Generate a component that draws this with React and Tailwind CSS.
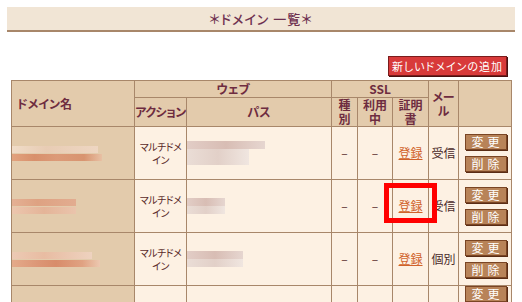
import React from "react";

const rows = [
  {
    domain: [
      { w: 86, c: "bg-[linear-gradient(90deg,#f0dcc8,#e8ccb4_40%,#eed6c2)]" },
      { w: 90, c: "bg-[linear-gradient(90deg,#e2a27e,#d8906c_25%,#dc9a78_50%,#d89470_80%,#e8c0a4)]" },
    ],
    path: [78, 62, 62],
    mail: "受信",
  },
  {
    domain: [
      { w: 64, c: "bg-[linear-gradient(90deg,#e4b094,#dea282_40%,#e2ac90)]" },
      { w: 64, c: "bg-[linear-gradient(90deg,#ecc6ae,#e4b498_50%,#eac4ac)]" },
    ],
    path: [38, 38],
    mail: "受信",
  },
  {
    domain: [
      { w: 80, c: "bg-[linear-gradient(90deg,#eccab4,#e8bca2_40%,#eed2bf)]" },
      { w: 88, c: "bg-[linear-gradient(90deg,#e4aa8a,#dc9676_30%,#d88c6a_50%,#e0a282_80%,#ecc8b0)]" },
    ],
    path: [56, 56],
    mail: "個別",
  },
];

function Btn({ children }) {
  return (
    <div className="w-[42px] h-[16px] bg-[#b88358] border border-[#7a4524] shadow-[1px_1px_0_#5a2c14] text-white text-[12px] leading-[14px] text-center tracking-[4px] pl-[3px] whitespace-nowrap">
      {children}
    </div>
  );
}

function DataRow({ row }) {
  return (
    <tr className="h-[53px]">
      <td className="bg-[#e3cbac] px-[3px] align-middle">
        <div className="flex flex-col gap-[1px]">
          {row.domain.map((b, i) => (
            <div key={i} className={`h-[7px] ${b.c}`} style={{ width: b.w }} />
          ))}
        </div>
      </td>
      <td className="text-center text-[10px] leading-[13px] text-[#5a2a2a] tracking-[-0.5px]">
        <span className="whitespace-nowrap">マルチドメ</span>
        <br />
        イン
      </td>
      <td className="px-[3px]">
        <div className="flex flex-col">
          {row.path.map((w, i) => (
            <div
              key={i}
              className={`h-[8px] ${i === 0 ? "bg-[linear-gradient(90deg,#e2cdc6,#d8bdb4_50%,#e6d6d0)]" : "bg-[linear-gradient(90deg,#eaddd6,#e2d0c8_50%,#f0e6e0)]"}`}
              style={{ width: w }}
            />
          ))}
        </div>
      </td>
      <td className="text-center text-[12px] text-[#5a2a2a]">–</td>
      <td className="text-center text-[12px] text-[#5a2a2a]">–</td>
      <td className="text-center text-[12px]">
        <span className="text-[#d0622a] underline">登録</span>
      </td>
      <td className="text-center text-[12px] text-[#4a2a2a] whitespace-nowrap">{row.mail}</td>
      <td>
        <div className="flex flex-col items-center gap-[6px] pl-[2px]">
          <Btn>変更</Btn>
          <Btn>削除</Btn>
        </div>
      </td>
    </tr>
  );
}

export default function App() {
  const th = "bg-[#e3cbac] border border-[#a8876a] text-[#6e2c40] font-bold text-[12px] leading-[14px] p-0 whitespace-nowrap";
  return (
    <div
      className="relative w-[522px] h-[302px] overflow-hidden bg-white [font-feature-settings:'palt']"
      style={{ fontFamily: '"Noto Sans CJK JP", "Noto Sans", sans-serif' }}
    >
      <div className="mx-[7px] pt-[7px]">
        <div className="h-[25px] bg-[#f1e5d5] border-b-2 border-[#a8876a] flex items-center justify-center text-[13px] text-[#6e3050] font-medium tracking-[1px]">
          ＊ドメイン 一覧＊
        </div>
      </div>

      <div className="flex justify-end pr-[15px] mt-[24px]">
        <div className="w-[119px] h-[20px] bg-[#d83a3a] border border-[#7a1c1c] shadow-[1px_1px_0_#4a1010] text-white text-[11px] leading-[18px] text-center tracking-[1px] whitespace-nowrap">
          新しいドメインの追加
        </div>
      </div>

      <table className="ml-[11px] mt-[4px] table-fixed border-collapse w-[501px] border border-[#a8876a]">
        <colgroup>
          <col className="w-[123px]" />
          <col className="w-[52px]" />
          <col className="w-[145px]" />
          <col className="w-[26px]" />
          <col className="w-[35px]" />
          <col className="w-[36px]" />
          <col className="w-[30px]" />
          <col className="w-[53px]" />
        </colgroup>
        <thead>
          <tr className="h-[17px]">
            <th rowSpan={2} className={`${th} text-left pl-[5px]`}>
              ドメイン名
            </th>
            <th colSpan={2} className={th}>
              ウェブ
            </th>
            <th colSpan={3} className={th}>
              SSL
            </th>
            <th rowSpan={2} className={th}>
              メー
              <br />ル
            </th>
            <th rowSpan={2} className={th}></th>
          </tr>
          <tr className="h-[29px]">
            <th className={`${th} tracking-[-0.5px]`}>アクション</th>
            <th className={th}>パス</th>
            <th className={th}>
              種<br />別
            </th>
            <th className={th}>
              利用
              <br />中
            </th>
            <th className={th}>
              証明
              <br />書
            </th>
          </tr>
        </thead>
        <tbody className="bg-[#fdf1e3] [&_td]:border [&_td]:border-[#a8876a] [&_td]:p-0">
          {rows.map((r, i) => (
            <DataRow key={i} row={r} />
          ))}
          <tr className="h-[53px]">
            <td className="bg-[#e3cbac]"></td>
            <td></td>
            <td></td>
            <td></td>
            <td></td>
            <td></td>
            <td></td>
            <td className="align-top pt-[7px]">
              <div className="flex flex-col items-center pl-[2px]">
                <Btn>変更</Btn>
              </div>
            </td>
          </tr>
        </tbody>
      </table>

      <div className="absolute left-[384px] top-[183px] w-[53px] h-[40px] border-[5px] border-[#ff0000]" />
    </div>
  );
}
